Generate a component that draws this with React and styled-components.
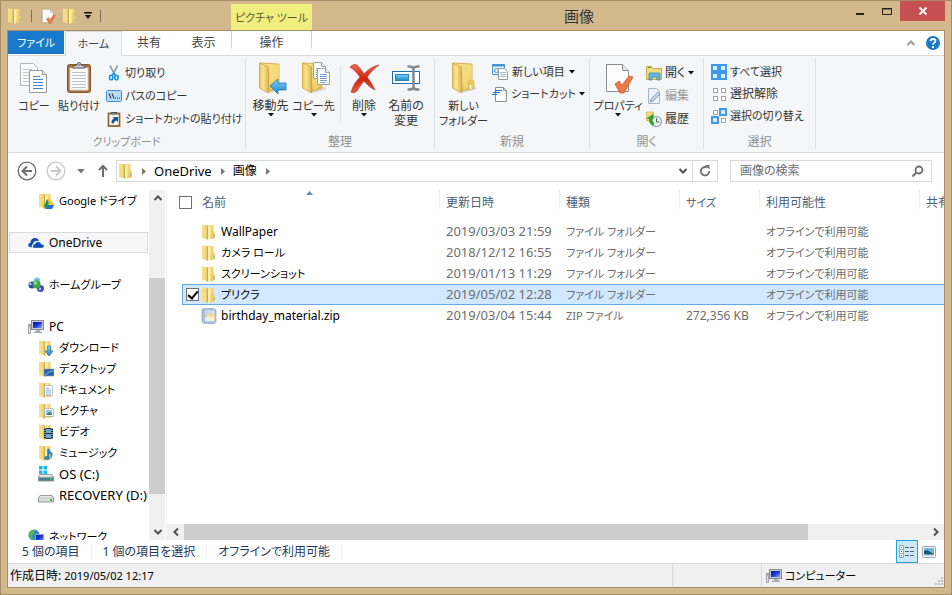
import { useState } from 'react';
import styled, { createGlobalStyle } from 'styled-components';

const GlobalStyle = createGlobalStyle`
  * {
    box-sizing: border-box;
  }
  body {
    margin: 0;
    font-family: 'Noto Sans', 'Noto Sans CJK JP', sans-serif;
    font-size: 12px;
    font-feature-settings: 'palt';
    line-height: 16px;
    color: #000;
  }
  button, input {
    font: inherit;
    font-feature-settings: inherit;
    color: inherit;
    margin: 0;
    padding: 0;
    border: 0;
    background: none;
  }
  a {
    color: inherit;
    text-decoration: none;
  }
  svg {
    display: block;
    flex: none;
  }
`;

const sizes = { kana: '11px', kanji: '12px', latin: '13px' };

const Window = styled.div`
  display: flex;
  flex-direction: column;
  height: 100vh;
  min-height: 420px;
  padding: 0 6px 6px;
  background: #d3b88b;
  border: 1px solid #a58c68;
  overflow: hidden;
`;
const TitleBar = styled.header`
  display: flex;
  height: 29px;
  flex: none;
`;
const QuickAccess = styled.div`
  display: flex;
  align-items: center;
  gap: 6px;
  width: 224px;
  flex: none;
  button {
    display: flex;
  }
`;
const QuickDivider = styled.span`
  width: 1px;
  height: 12px;
  margin: 0 2px;
  background: #7e6d53;
`;
const ContextTitle = styled.div`
  width: 81px;
  height: 26px;
  margin-top: 3px;
  flex: none;
  background: #f0ee7e;
  color: #5b5a33;
  font-size: 11px;
  line-height: 27px;
  text-align: center;
  white-space: nowrap;
`;
const Title = styled.h1`
  flex: 1;
  margin: 0;
  font-size: 15px;
  font-weight: 400;
  line-height: 30px;
  text-align: center;
  color: #333;
`;
const WindowButtons = styled.div`
  display: flex;
  align-items: flex-start;
`;
const WindowButton = styled.button`
  display: flex;
  align-items: center;
  justify-content: center;
  width: ${({ $close }) => ($close ? '45px' : '27px')};
  height: 20px;
  background: ${({ $close }) => ($close ? '#c75050' : 'transparent')};
`;

const Client = styled.div`
  display: flex;
  flex-direction: column;
  flex: 1;
  min-height: 0;
  border: 1px solid #a58c68;
  background: #fff;
`;

const Tabs = styled.nav`
  display: flex;
  height: 25px;
  flex: none;
  border-bottom: 1px solid #dadbdc;
`;
const Tab = styled.button`
  height: 24px;
  width: ${({ $width }) => $width}px;
  color: #444;
  font-size: ${({ $text = 'kanji' }) => sizes[$text]};
  line-height: 24px;
  text-align: center;
`;
const FileTab = styled(Tab)`
  height: 23px;
  margin-right: 1px;
  background: #1979ca;
  color: #fff;
`;
const ActiveTab = styled(Tab)`
  height: 25px;
  background: #f5f6f7;
  border: 1px solid #dadbdc;
  border-bottom: 0;
`;
const ContextTab = styled(Tab)`
  border: 1px solid;
  border-width: 0 1px;
  border-image: linear-gradient(#d0d0d0 60%, #fff 80%) 1;
`;
const TabTools = styled.div`
  display: flex;
  align-items: center;
  gap: 10px;
  margin-left: auto;
  padding-right: 4px;
`;

const Ribbon = styled.div`
  display: flex;
  height: 97px;
  flex: none;
  padding-top: 2px;
  background: #f5f6f7;
  border-bottom: 1px solid #dadbdc;
`;
const Group = styled.section`
  display: flex;
  flex-direction: column;
  width: ${({ $width }) => $width}px;
  height: 91px;
  flex: none;
  border-right: 1px solid #dfe1e4;
`;
const GroupBody = styled.div`
  display: flex;
  flex: 1;
  padding: 3px 0 0 ${({ $pad = 5 }) => $pad}px;
`;
const GroupName = styled.h2`
  margin: 0;
  font-size: ${({ $text = 'kanji' }) => sizes[$text]};
  font-weight: 400;
  line-height: 14px;
  text-align: center;
  color: #8e9093;
`;
const BigButton = styled.button`
  display: flex;
  flex-direction: column;
  align-items: center;
  width: ${({ $width }) => $width}px;
  height: 70px;
  flex: none;
  padding-top: 1px;
  font-size: ${({ $text = 'kanji' }) => sizes[$text]};
  line-height: 15px;
  color: #333;
  white-space: nowrap;
  span {
    padding-top: 4px;
  }
`;
const SmallColumn = styled.div`
  display: flex;
  flex-direction: column;
  align-items: flex-start;
  padding-left: ${({ $pad = 0 }) => $pad}px;
`;
const SmallButton = styled.button`
  display: flex;
  align-items: center;
  gap: ${({ $gap = 3 }) => $gap}px;
  height: ${({ $height = 23 }) => $height}px;
  font-size: ${({ $text = 'kanji' }) => sizes[$text]};
  color: #333;
  white-space: nowrap;
  &:disabled {
    color: #9a9a9a;
  }
`;
const InnerDivider = styled.span`
  width: 1px;
  height: 55px;
  margin: 6px 2px 0 5px;
  background: #dfe1e4;
`;

const AddressRow = styled.div`
  display: flex;
  align-items: center;
  height: 36px;
  flex: none;
  padding: 0 12px 0 9px;
`;
const History = styled.div`
  display: flex;
  align-items: center;
  width: 99px;
  flex: none;
  gap: 9px;
  button:nth-child(3) {
    padding: 0 3px 0 2px;
  }
`;
const AddressBox = styled.nav`
  display: flex;
  align-items: center;
  flex: 1;
  height: 22px;
  padding-left: 1px;
  border: 1px solid #d9d9d9;
`;
const Place = styled.a`
  padding: 0 9px 0 8px;
  font-size: ${({ $text = 'kanji' }) => sizes[$text]};
`;
const AddressButton = styled.button`
  display: flex;
  align-items: center;
  justify-content: center;
  width: 25px;
  height: 20px;
  margin-left: ${({ $push }) => ($push ? 'auto' : '0')};
  padding-left: ${({ $push }) => ($push ? '6px' : '0')};
  border-left: ${({ $line }) => ($line ? '1px solid #d9d9d9' : '0')};
`;
const SearchBox = styled.label`
  display: flex;
  align-items: center;
  width: 202px;
  height: 22px;
  margin-left: 12px;
  padding: 0 7px 0 9px;
  border: 1px solid #d9d9d9;
  input {
    flex: 1;
    min-width: 0;
    outline: 0;
  }
  input::placeholder {
    color: #6d6d6d;
    opacity: 1;
  }
`;

const Main = styled.main`
  display: flex;
  flex: 1;
  min-height: 0;
  padding-top: 1px;
`;
const Tree = styled.nav`
  width: 141px;
  flex: none;
  overflow: hidden;
`;
const TreeItem = styled.a`
  display: flex;
  align-items: center;
  gap: 5px;
  height: 21px;
  margin: ${({ $gap }) => ($gap ? '21px' : '0')} 1px 0;
  padding-left: ${({ $nested }) => ($nested ? 28 : 18)}px;
  border: 1px solid ${({ $selected }) => ($selected ? '#dadada' : 'transparent')};
  background: ${({ $selected }) => ($selected ? '#f7f7f7' : 'transparent')};
  font-size: ${({ $text = 'kana' }) => sizes[$text]};
  white-space: nowrap;
`;
const ScrollBar = styled.div`
  display: flex;
  flex-direction: column;
  width: 16px;
  flex: none;
  background: #f0f0f0;
`;
const ScrollArrow = styled.button`
  display: flex;
  align-items: center;
  justify-content: center;
  width: 17px;
  height: 16px;
  flex: none;
`;
const ScrollTrack = styled.div`
  display: flex;
  flex-direction: column;
  justify-content: flex-end;
  flex: 1;
  padding-bottom: 30px;
`;
const ScrollThumb = styled.div`
  height: 75%;
  background: #cdcdcd;
`;
const ListPane = styled.div`
  display: flex;
  flex-direction: column;
  flex: 1;
  min-width: 0;
  margin-left: 1px;
  border-left: 1px solid #f0f0f0;
`;
const ListScroll = styled.div`
  flex: 1;
  min-height: 0;
  overflow: hidden;
  padding-left: 15px;
`;
const FileTable = styled.table`
  width: 100%;
  min-width: 857px;
  table-layout: fixed;
  border-spacing: 0;
  th, td {
    height: 21px;
    padding: 0 0 0 6px;
    font-weight: 400;
    text-align: left;
    white-space: nowrap;
  }
  th {
    height: 23px;
    padding-top: 2px;
    color: #4c607a;
    border-left: 1px solid;
    border-image: linear-gradient(#dfe6ef, #fff) 1;
  }
  th:first-child {
    border: 0;
  }
  th:first-child, td:first-child {
    padding-left: 3px;
  }
  tbody::before {
    content: '';
    display: block;
    height: 8px;
  }
`;
const HeadCell = styled.th`
  font-size: ${({ $text = 'kanji' }) => sizes[$text]};
`;
const FileRow = styled.tr`
  background: ${({ $selected }) => ($selected ? '#d1e8ff' : 'transparent')};
  td {
    color: #6d6d6d;
    padding-left: 7px;
    border: solid ${({ $selected }) => ($selected ? '#66a7e8' : 'transparent')};
    border-width: 1px 0;
    line-height: 19px;
  }
  td:first-child {
    border-left-width: 1px;
    color: #000;
  }
`;
const FileCell = styled.td`
  font-size: ${({ $text = 'kanji' }) => sizes[$text]};
`;
const NameCell = styled.div`
  display: flex;
  align-items: center;
  gap: 4px;
`;
const CheckBox = styled.input`
  appearance: none;
  display: flex;
  justify-content: center;
  width: 13px;
  height: 13px;
  flex: none;
  margin-right: ${({ $header }) => ($header ? '6px' : '-2px')};
  border: 1px solid #707070;
  background: #fff;
  visibility: ${({ $hidden }) => ($hidden ? 'hidden' : 'visible')};
  &:checked::after {
    content: '';
    width: 4px;
    height: 8px;
    border: solid #000;
    border-width: 0 2px 2px 0;
    transform: rotate(40deg);
  }
`;
const HeaderName = styled.div`
  display: flex;
  align-items: center;
  position: relative;
  margin-left: -6px;
  gap: 4px;
`;
const SortMark = styled.svg`
  position: absolute;
  left: 49%;
  top: -4px;
`;
const HorizontalBar = styled.div`
  display: flex;
  height: 16px;
  flex: none;
  background: #f0f0f0;
`;
const HorizontalTrack = styled.div`
  flex: 1;
`;
const HorizontalThumb = styled.div`
  width: 84%;
  height: 16px;
  background: #cdcdcd;
`;

const DetailsBar = styled.div`
  display: flex;
  align-items: center;
  height: 23px;
  flex: none;
  padding: 0 4px 0 3px;
  color: #1e395b;
`;
const Detail = styled.span`
  padding: 0 11px;
  line-height: 16px;
  border-right: 1px solid #f0f0f0;
`;
const ViewButtons = styled.div`
  display: flex;
  margin-left: auto;
`;
const ViewButton = styled.button`
  display: flex;
  align-items: center;
  justify-content: center;
  width: 22px;
  height: 23px;
  border: 1px solid ${({ $active }) => ($active ? '#26a0da' : 'transparent')};
  background: ${({ $active }) => ($active ? '#cce8f7' : 'transparent')};
`;
const StatusBar = styled.footer`
  display: flex;
  height: 24px;
  flex: none;
  border-top: 1px solid #d7d7d7;
  background: #f0f0f0;
  line-height: 22px;
  time {
    font-size: 11px;
  }
`;
const StatusCell = styled.div`
  display: flex;
  align-items: center;
  gap: 3px;
  width: ${({ $width }) => ($width ? `${$width}px` : 'auto')};
  flex: ${({ $width }) => ($width ? 'none' : 1)};
  margin: 1px 0;
  padding-left: ${({ $width }) => ($width ? 4 : 2)}px;
  border-left: ${({ $width }) => ($width ? '1px solid #d7d7d7' : '0')};
  font-size: ${({ $text = 'kanji' }) => sizes[$text]};
  svg:last-child {
    margin: auto 1px 1px auto;
  }
`;

const Gradients = () => (
  <svg width="0" height="0" style={{ position: 'absolute' }} aria-hidden="true">
    <defs>
      <linearGradient id="gold" x1="0" y1="0" x2="1" y2="1">
        <stop offset="0" stopColor="#f9e89a" />
        <stop offset="0.6" stopColor="#efd06a" />
        <stop offset="1" stopColor="#d9ab3e" />
      </linearGradient>
      <linearGradient id="flap" x1="0" y1="0" x2="1" y2="0">
        <stop offset="0" stopColor="#ecc65a" />
        <stop offset="0.4" stopColor="#fae594" />
        <stop offset="1" stopColor="#dcb450" />
      </linearGradient>
      <linearGradient id="leaf" x1="0" y1="0" x2="1" y2="0">
        <stop offset="0" stopColor="#f5e08a" />
        <stop offset="0.7" stopColor="#f3da7e" />
        <stop offset="1" stopColor="#d6b04c" />
      </linearGradient>
      <linearGradient id="blue" x1="0" y1="0" x2="0" y2="1">
        <stop offset="0" stopColor="#7fd0f5" />
        <stop offset="1" stopColor="#1787cf" />
      </linearGradient>
      <linearGradient id="red" x1="0" y1="0" x2="0" y2="1">
        <stop offset="0" stopColor="#f06a4f" />
        <stop offset="0.5" stopColor="#d0220f" />
        <stop offset="1" stopColor="#e4614a" />
      </linearGradient>
      <linearGradient id="screen" x1="0" y1="0" x2="1" y2="1">
        <stop offset="0" stopColor="#0a1a9c" />
        <stop offset="0.5" stopColor="#1b36d6" />
        <stop offset="1" stopColor="#7fb2f5" />
      </linearGradient>
      <linearGradient id="disk" x1="0" y1="0" x2="0" y2="1">
        <stop offset="0" stopColor="#f6f6f6" />
        <stop offset="1" stopColor="#8f9499" />
      </linearGradient>
    </defs>
  </svg>
);

const Folder = ({ children }) => (
  <svg width="16" height="16" viewBox="0 0 16 16">
    <path d="M6 1h6.500v13.500L6 15.500z" fill="url(#gold)" />
    <path d="M7 2h2.500v13L7 15.500z" fill="#fbeeb0" />
    <path d="M1 .5l5.500.7V15.500L1 14z" fill="url(#leaf)" />
    <path d="M6.500 1.500v14" stroke="#c9a040" strokeWidth=".7" />
    <path d="M10.500 8.500h3.500v5.500l-3.500 1z" fill="#f0d169" />
    <path d="M12.500 10.500h1v3h-1z" fill="#5fb4dc" />
    {children}
  </svg>
);

const MiniSheet = ({ x, y }) => (
  <g transform={`translate(${x} ${y})`}>
    <path d="M.5.5h8l4 4v12H.5z" fill="#fff" stroke="#9aa0a6" />
    <path d="M8.500.5v4h4" fill="#eee" stroke="#9aa0a6" />
    <path d="M3 6.500h7M3 8.500h7M3 10.500h7M3 12.500h7M3 14.500h5" stroke="#77a3d3" />
  </g>
);

const BigFolder = ({ kind }) => (
  <svg width="32" height="32" viewBox="0 0 32 32">
    <path d="M10 29l17-4 2 2-14 4z" fill="#000" opacity=".12" />
    <path d="M5 1l19 1v24l-10 3z" fill="url(#gold)" stroke="#d2a53e" strokeWidth=".8" />
    <path d="M14 5l10-2v21l-8 4z" fill="#f6df86" opacity=".6" />
    <path d="M4.500 1l9 4v26l-9-5z" fill="url(#flap)" stroke="#cfa03a" strokeWidth=".8" />
    {kind === 'new' && (
      <g>
        <path d="M21 19q5-2 5 1v6l-5 2z" fill="#f0cd61" stroke="#d2a53e" strokeWidth=".6" />
        <path d="M22.500 23v4" stroke="#fff" strokeWidth="1.500" />
      </g>
    )}
    {kind === 'move' && (
      <path d="M15 24l8-7v4h8v7h-8v4z" fill="url(#blue)" stroke="#2377b5" strokeWidth=".8" />
    )}
    {kind === 'copy' && (
      <g>
        <MiniSheet x={15} y={0} />
        <MiniSheet x={19} y={6} />
      </g>
    )}
  </svg>
);

const CopyIcon = () => (
  <svg width="32" height="32" viewBox="0 0 32 32">
    <path d="M2.500 1.500h13l4 4v18h-17z" fill="#fbfbfb" stroke="#b2b4b6" />
    <path d="M5 7.500h9M5 10.500h6M5 13.500h6M5 16.500h6M5 19.500h6" stroke="#c5c9cd" />
    <path d="M11.500 8.500h13l4 4v18h-17z" fill="#fff" stroke="#98999b" />
    <path d="M24.500 8.500v4h4" fill="#eee" stroke="#98999b" />
    <path d="M15 14.500h7M15 17.500h10M15 20.500h10M15 23.500h10M15 26.500h10" stroke="#3f88d0" />
  </svg>
);

const PasteIcon = () => (
  <svg width="32" height="32" viewBox="0 0 32 32">
    <rect x="4.500" y="2.500" width="23" height="28" rx="2" fill="#a9743f" stroke="#855726" />
    <path d="M7 6h18v22H7z" fill="#fff" stroke="#d8d4cd" />
    <path d="M9 10.500h14M9 13.500h14M9 16.500h14M9 19.500h14M9 22.500h14M9 25.500h14" stroke="#b9c6cf" />
    <path d="M10 6V4l4-1q0-2.500 2-2.500T18 3l4 1v2z" fill="#ced1d4" stroke="#54595e" />
    <circle cx="16" cy="3" r=".8" fill="#54595e" />
  </svg>
);

const DeleteIcon = () => (
  <svg width="32" height="32" viewBox="0 0 32 32">
    <path
      d="M2 5q4-4 7-2 4 4 7 9Q22 5 31 3 25 7 19 15q5 6 8 13-5-2-11-9-5 6-7 10-3 3-6 1 2-8 9-15Q7 8 2 5z"
      fill="url(#red)"
      stroke="#b52716"
      strokeWidth=".6"
    />
  </svg>
);

const RenameIcon = () => (
  <svg width="32" height="32" viewBox="0 0 32 32">
    <rect x="2.500" y="9.500" width="27" height="12" fill="#fff" stroke="#1f6fb0" />
    <rect x="5.500" y="12.500" width="13" height="6" fill="url(#blue)" stroke="#2a7fc1" />
    <path d="M17.500 4.500q5-.5 6 2 1-2.500 6-2M23.500 6v20M17.500 27.500q5 .5 6-2 1 2.500 6 2" fill="none" stroke="#84888c" strokeWidth="2.500" />
  </svg>
);

const PropertiesIcon = ({ size = 32 }) => (
  <svg width={size} height={size} viewBox="0 0 32 32">
    <path d="M4.500 2.500h16l6 6v21h-22z" fill="#fcfcfc" stroke="#8c8c8c" />
    <path d="M20.500 2.500v6h6" fill="#e5e5e5" stroke="#8c8c8c" />
    <path d="M13 22l4-3 3 4 7-9 4 1-9 16h-4z" fill="#ee7948" stroke="#c9562a" strokeWidth=".7" />
  </svg>
);

const CutIcon = () => (
  <svg width="16" height="16" viewBox="0 0 16 16">
    <path d="M4 .5l4.500 9M11.500.5L7 9.500" stroke="#7d929f" strokeWidth="1.500" />
    <ellipse cx="5.200" cy="12.500" rx="1.700" ry="2.300" fill="none" stroke="#1796d8" strokeWidth="1.600" />
    <ellipse cx="10.500" cy="12.500" rx="1.700" ry="2.300" fill="none" stroke="#1796d8" strokeWidth="1.600" />
    <path d="M7.800 8l-2 3M7.800 8l2.200 3" stroke="#1796d8" strokeWidth="1.500" />
  </svg>
);

const PathIcon = () => (
  <svg width="16" height="16" viewBox="0 0 16 16">
    <rect x=".5" y="2.500" width="15" height="11" rx="1" fill="#b4dbfb" stroke="#3f8fdb" />
    <path d="M3 5.500l2 5M6 5.500l2 5" stroke="#222" />
    <path d="M9 10h1M11 10h1M13 10h1" stroke="#222" />
  </svg>
);

const PasteLinkIcon = () => (
  <svg width="16" height="16" viewBox="0 0 16 16">
    <rect x="2.500" y="2.500" width="11" height="12.500" fill="#fff" stroke="#93672f" strokeWidth="1.800" />
    <path d="M5 3V1.500h6V3z" fill="#aaa" stroke="#555" />
    <rect x="5" y="5.500" width="7" height="7" fill="#f2f6fa" />
    <path d="M5.500 12.500q-.5-4 2.500-5L7 6h5v5l-1.300-1.500Q8 10 7.500 12.500z" fill="#165a9c" />
  </svg>
);

const NewItemIcon = () => (
  <svg width="16" height="16" viewBox="0 0 16 16">
    <path d="M.5.5h12v10H.5z" fill="#e4f1fa" stroke="#4695cf" />
    <path d="M.5 1.500h12" stroke="#4695cf" strokeWidth="2" />
    <circle cx="4.500" cy="6.500" r="2" fill="none" stroke="#4695cf" />
    <path d="M6.500 4.500h6l3 3v8h-9z" fill="#fff" stroke="#969a9e" />
    <path d="M8 8.500h6M8 10.500h6M8 12.500h6" stroke="#a9b8c4" />
  </svg>
);

const ShortcutIcon = () => (
  <svg width="16" height="16" viewBox="0 0 16 16">
    <path d="M3.500 1.500h8l3 3v11h-11z" fill="#fff" stroke="#8b8f93" />
    <path d="M11.500 1.500v3h3" fill="none" stroke="#8b8f93" />
    <path d="M3 4.500h7M1 6.500h7M0 8.500h5" stroke="#1573d0" />
  </svg>
);

const OpenIcon = () => (
  <svg width="16" height="16" viewBox="0 0 16 16">
    <path d="M.5 1.500h5l1 2h9v11H.5z" fill="#f2d982" stroke="#c9a94c" />
    <path d="M2 2.500h3" stroke="#4fb24f" />
    <path d="M3 15V9q0-1 1-1h9q1 0 1 1v6h-3v-3H6v3z" fill="#66b9e2" stroke="#2d83b5" strokeWidth=".7" />
  </svg>
);

const EditIcon = () => (
  <svg width="16" height="16" viewBox="0 0 16 16">
    <path d="M2.500.5h8l3 3v12h-11z" fill="#eef4fb" stroke="#a2b5cc" />
    <path d="M5 11l7-7 2 2-7 7-3 1z" fill="#c4d4e6" stroke="#89a1bf" />
  </svg>
);

const HistoryIcon = () => (
  <svg width="16" height="16" viewBox="0 0 16 16">
    <path d="M.5 1h7v9h-7z" fill="url(#gold)" stroke="#d2a53e" strokeWidth=".6" />
    <circle cx="10.500" cy="10.500" r="5" fill="#e9f1f5" stroke="#7d8b94" />
    <path d="M10.500 7v4h3" fill="none" stroke="#56646e" />
    <path d="M7 3.500v3q-2 3 1 6l-1.500 2q-4-3-3-7H1z" fill="#2da72d" stroke="#168016" strokeWidth=".5" />
  </svg>
);

const squares = [[1, 1], [9, 1], [1, 9], [9, 9]];
const SelectIcon = ({ lit }) => (
  <svg width="16" height="16" viewBox="0 0 16 16">
    {squares.map(([x, y], i) =>
      lit.includes(i) ? (
        <g key={i}>
          <rect x={x - 1} y={y - 1} width="8" height="8" fill="#3d98ee" />
          <rect x={x + 1} y={y + 1} width="4" height="4" fill="#d8ecfd" />
        </g>
      ) : (
        <rect key={i} x={x + 1.5} y={y + 1.5} width="4" height="4" fill="#fff" stroke="#a4a4a4" />
      )
    )}
  </svg>
);

const Caret = ({ color = '#111', size = 6 }) => (
  <svg width={size} height={size / 2 + 1} viewBox="0 0 6 4">
    <path d="M0 0h6L3 3.500z" fill={color} />
  </svg>
);

const Crumb = () => (
  <svg width="4" height="7" viewBox="0 0 4 7">
    <path d="M0 0l4 3.500L0 7z" fill="#777" />
  </svg>
);

const turns = { up: 0, right: 90, down: 180, left: 270 };
const Chevron = ({ to, color = '#505050' }) => (
  <svg width="10" height="10" viewBox="0 0 10 10">
    <path d="M1.500 7L5 3.500 8.500 7" fill="none" stroke={color} strokeWidth="2" transform={`rotate(${turns[to]} 5 5)`} />
  </svg>
);

const RoundArrow = ({ back }) => (
  <svg width="20" height="20" viewBox="0 0 20 20">
    <g transform={back ? undefined : 'rotate(180 10 10)'} fill="none" stroke={back ? '#6e6e6e' : '#c9c9c9'}>
      <circle cx="10" cy="10" r="8.800" strokeWidth="1.300" />
      <path d="M15 10H6M10 5.500L5.500 10l4.500 4.500" strokeWidth="2" />
    </g>
  </svg>
);

const OneDriveIcon = () => (
  <svg width="16" height="16" viewBox="0 0 16 16">
    <path d="M.5 11.500q-1-3 2-4Q3 3 7 3q3 0 4 3-5-1-6 3-2 1-1 3.500z" fill="#0b4ab0" />
    <path d="M5 13q-1-4 2-4 1-3 4-2 2 0 2 2 3 0 3 2t-2 2z" fill="#0b4ab0" stroke="#fff" strokeWidth=".4" />
  </svg>
);

const HomeGroupIcon = () => (
  <svg width="16" height="16" viewBox="0 0 16 16">
    <circle cx="9" cy="3.500" r="3" fill="#78bce8" />
    <circle cx="4" cy="8" r="3.500" fill="#2c4ba8" />
    <circle cx="12.500" cy="11.500" r="3.500" fill="#3c55ac" />
    <circle cx="8.500" cy="7.500" r="4" fill="#3aa843" />
    <circle cx="7.500" cy="6" r="1.500" fill="#a9e5a0" />
    <circle cx="2.500" cy="7" r="1.200" fill="#b1c7ef" />
    <circle cx="12" cy="12" r="1.200" fill="#b1c7ef" />
  </svg>
);

const PcIcon = () => (
  <svg width="16" height="16" viewBox="0 0 16 16">
    <rect x="3.500" y="1.500" width="12" height="9" fill="#c9cbd0" stroke="#888c94" />
    <rect x="5" y="3" width="9" height="6" fill="url(#screen)" />
    <path d="M8 11h4v1.500h2V14H6v-1.500h2z" fill="#a7abb2" />
    <rect x=".5" y="5.500" width="2" height="9" fill="#dfe1e4" stroke="#83878d" strokeWidth=".7" />
    <path d="M1 7h1" stroke="#2fae2f" />
  </svg>
);

const DiskIcon = ({ system }) => (
  <svg width="16" height="16" viewBox="0 0 16 16">
    {system && <path d="M1 0h3.500v3.500H1zM5.500 0H9v3.500H5.500zM1 4.500h3.500V8H1zM5.500 4.500H9V8H5.500z" fill="#18b9f1" />}
    <path d="M2 8.500h12l1.500 2.500v4H.5v-4z" fill="url(#disk)" stroke="#72797e" strokeWidth=".7" />
    <path d="M1 11.500h14v3H1z" fill={system ? '#4e7e93' : '#dedfe0'} />
    <path d="M12 12h2v2h-2z" fill="#36c436" />
  </svg>
);

const NetworkIcon = () => (
  <svg width="16" height="16" viewBox="0 0 16 16">
    <circle cx="6" cy="6" r="5.500" fill="#2a86d8" />
    <path d="M2 2q4-2 5 1L4 7q2 3 0 4Q0 8 2 2z" fill="#55b947" />
    <rect x="7.500" y="5.500" width="8" height="7" fill="url(#screen)" stroke="#9da1a9" />
    <path d="M9 14h5" stroke="#888" />
  </svg>
);

const ZipIcon = () => (
  <svg width="16" height="16" viewBox="0 0 16 16">
    <path d="M1 1l10-1 4 2v12l-3 2-10-1-1-2z" fill="#a9c0e2" stroke="#8098c4" strokeWidth=".6" />
    <path d="M4 2.500h10v11H4z" fill="#cfdef2" />
    <path d="M5 5.500h3l1 1h5v6H5z" fill="#f3dfa0" stroke="#d8bd70" strokeWidth=".5" />
    <path d="M4 9h9v4H4z" fill="#f7f9fd" opacity=".7" />
  </svg>
);

const overlays = {
  drive: (
    <g>
      <path d="M9 6h3l4 6h-4z" fill="#f8c61a" />
      <path d="M9 6l2 4-3 6-2-3z" fill="#1a9b50" />
      <path d="M9.500 12H16l-2 4H7.500z" fill="#256fd8" />
    </g>
  ),
  download: <path d="M9.500 6h3v5H15l-4 5-4-5h2.500z" fill="url(#blue)" stroke="#176ba8" strokeWidth=".6" />,
  desktop: (
    <g>
      <path d="M6 8h10v7H6z" fill="#2760a8" stroke="#8aa5c4" strokeWidth=".6" />
      <path d="M7 14q4-4 8-4" stroke="#7db9ec" fill="none" />
    </g>
  ),
  document: (
    <g>
      <path d="M6.500 3.500h8v10h-8z" fill="#fff" stroke="#a9afb5" strokeWidth=".7" />
      <path d="M8 6h3M8 8h5M8 10h5M8 12h5" stroke="#6b9ac9" strokeWidth=".8" />
    </g>
  ),
  picture: (
    <g>
      <path d="M6.500 5.500h9v8h-9z" fill="#fff" stroke="#9fa5ab" strokeWidth=".7" />
      <path d="M8 7h6v5H8z" fill="#8cc6ed" />
      <path d="M8 12l3-3 3 1v2z" fill="#3c8467" />
    </g>
  ),
  video: (
    <g>
      <path d="M6 4h9v11H6z" fill="#2b3136" />
      <path d="M8 5h5v4H8zM8 10h5v4H8z" fill="#6aa8cf" />
      <path d="M7 4v11M14 4v11" stroke="#e8e8e8" strokeDasharray="1 1" />
    </g>
  ),
  music: (
    <g fill="#1e8bd6" stroke="#115f9b" strokeWidth=".4">
      <path d="M9.500 4h1.500q0 2 3 4 1 2-.5 4 .5-3-2.500-4v5h-1.500z" />
      <ellipse cx="9" cy="13" rx="2.400" ry="1.800" />
    </g>
  ),
};

const tree = [
  { name: 'Google ドライブ', icon: <Folder>{overlays.drive}</Folder>, nested: true },
  { name: 'OneDrive', icon: <OneDriveIcon />, gap: true, selected: true, text: 'kanji' },
  { name: 'ホームグループ', icon: <HomeGroupIcon />, gap: true },
  { name: 'PC', icon: <PcIcon />, gap: true, text: 'kanji' },
  { name: 'ダウンロード', icon: <Folder>{overlays.download}</Folder>, nested: true },
  { name: 'デスクトップ', icon: <Folder>{overlays.desktop}</Folder>, nested: true },
  { name: 'ドキュメント', icon: <Folder>{overlays.document}</Folder>, nested: true },
  { name: 'ピクチャ', icon: <Folder>{overlays.picture}</Folder>, nested: true },
  { name: 'ビデオ', icon: <Folder>{overlays.video}</Folder>, nested: true },
  { name: 'ミュージック', icon: <Folder>{overlays.music}</Folder>, nested: true },
  { name: 'OS (C:)', icon: <DiskIcon system />, nested: true, text: 'latin' },
  { name: 'RECOVERY (D:)', icon: <DiskIcon />, nested: true, text: 'latin' },
  { name: 'ネットワーク', icon: <NetworkIcon />, gap: true },
];

const files = [
  { name: 'WallPaper', date: '2019/03/03 21:59', type: 'ファイル フォルダー', text: 'kanji' },
  { name: 'カメラ ロール', date: '2018/12/12 16:55', type: 'ファイル フォルダー' },
  { name: 'スクリーンショット', date: '2019/01/13 11:29', type: 'ファイル フォルダー' },
  { name: 'プリクラ', date: '2019/05/02 12:28', type: 'ファイル フォルダー' },
  { name: 'birthday_material.zip', date: '2019/03/04 15:44', type: 'ZIP ファイル', size: '272,356 KB', text: 'kanji' },
];

const RibbonTabs = () => (
  <Tabs>
    <FileTab $width={56} $text="kana">ファイル</FileTab>
    <ActiveTab $width={57} $text="kana">ホーム</ActiveTab>
    <Tab $width={54}>共有</Tab>
    <Tab $width={55}>表示</Tab>
    <ContextTab $width={81}>操作</ContextTab>
    <TabTools>
      <button aria-label="リボンの最小化">
        <Chevron to="up" color="#9a9a9a" />
      </button>
      <button aria-label="ヘルプ">
        <svg width="14" height="14" viewBox="0 0 14 14">
          <circle cx="7" cy="7" r="7" fill="#1979ca" />
          <path d="M4.500 5.200Q4.700 3 7 3t2.500 2Q9.500 6.200 8 7 7 7.500 7 8.700" fill="none" stroke="#fff" strokeWidth="1.800" />
          <path d="M6 10h2v2H6z" fill="#fff" />
        </svg>
      </button>
    </TabTools>
  </Tabs>
);

const RibbonPanel = () => (
  <Ribbon>
    <Group $width={238}>
      <GroupBody>
        <BigButton $width={42} $text="kana"><CopyIcon /><span>コピー</span></BigButton>
        <BigButton $width={48} $text="kana"><PasteIcon /><span>貼り付け</span></BigButton>
        <SmallColumn $pad={3}>
          <SmallButton $text="kana"><CutIcon />切り取り</SmallButton>
          <SmallButton $text="kana"><PathIcon />パスのコピー</SmallButton>
          <SmallButton $text="kana"><PasteLinkIcon />ショートカットの貼り付け</SmallButton>
        </SmallColumn>
      </GroupBody>
      <GroupName $text="kana">クリップボード</GroupName>
    </Group>
    <Group $width={189}>
      <GroupBody $pad={3}>
        <BigButton $width={43}><BigFolder kind="move" /><span>移動先</span><Caret /></BigButton>
        <BigButton $width={43} $text="kana"><BigFolder kind="copy" /><span>コピー先</span><Caret /></BigButton>
        <InnerDivider />
        <BigButton $width={42}><DeleteIcon /><span>削除</span><Caret /></BigButton>
        <BigButton $width={42}><RenameIcon /><span>名前の<br />変更</span></BigButton>
      </GroupBody>
      <GroupName>整理</GroupName>
    </Group>
    <Group $width={155}>
      <GroupBody $pad={4}>
        <BigButton $width={49} $text="kana"><BigFolder kind="new" /><span>新しい<br />フォルダー</span></BigButton>
        <SmallColumn $pad={4}>
          <SmallButton $height={22} $gap={4} $text="kana"><NewItemIcon />新しい項目<Caret /></SmallButton>
          <SmallButton $height={22} $text="kana"><ShortcutIcon />ショートカット<Caret /></SmallButton>
        </SmallColumn>
      </GroupBody>
      <GroupName>新規</GroupName>
    </Group>
    <Group $width={114}>
      <GroupBody $pad={4}>
        <BigButton $width={48} $text="kana"><PropertiesIcon /><span>プロパティ</span><Caret /></BigButton>
        <SmallColumn $pad={4}>
          <SmallButton><OpenIcon />開く<Caret /></SmallButton>
          <SmallButton disabled><EditIcon />編集</SmallButton>
          <SmallButton><HistoryIcon />履歴</SmallButton>
        </SmallColumn>
      </GroupBody>
      <GroupName>開く</GroupName>
    </Group>
    <Group $width={112}>
      <GroupBody $pad={7}>
        <SmallColumn>
          <SmallButton $height={22} $text="kana"><SelectIcon lit={[0, 1, 2, 3]} />すべて選択</SmallButton>
          <SmallButton $height={22}><SelectIcon lit={[]} />選択解除</SmallButton>
          <SmallButton $height={22} $text="kana"><SelectIcon lit={[1, 2]} />選択の切り替え</SmallButton>
        </SmallColumn>
      </GroupBody>
      <GroupName>選択</GroupName>
    </Group>
  </Ribbon>
);

const FileList = () => {
  const [selected, setSelected] = useState('プリクラ');
  const toggle = (name) => setSelected(selected === name ? '' : name);

  return (
    <ListPane>
      <ListScroll>
        <FileTable>
          <colgroup>
            <col />
            <col width="120" />
            <col width="120" />
            <col width="80" />
            <col width="160" />
            <col width="120" />
          </colgroup>
          <thead>
            <tr>
              <HeadCell>
                <HeaderName>
                  <CheckBox type="checkbox" aria-label="すべて選択" $header />
                  名前
                  <SortMark width="7" height="4" viewBox="0 0 7 4">
                    <path d="M0 4l3.500-4L7 4z" fill="#5a8fb8" />
                  </SortMark>
                </HeaderName>
              </HeadCell>
              <HeadCell>更新日時</HeadCell>
              <HeadCell>種類</HeadCell>
              <HeadCell $text="kana">サイズ</HeadCell>
              <HeadCell>利用可能性</HeadCell>
              <HeadCell>共有</HeadCell>
            </tr>
          </thead>
          <tbody>
            {files.map(({ name, date, type, size, text = 'kana' }) => (
              <FileRow key={name} $selected={selected === name}>
                <FileCell $text={text}>
                  <NameCell>
                    <CheckBox
                      type="checkbox"
                      aria-label={name}
                      checked={selected === name}
                      onChange={() => toggle(name)}
                      $hidden={selected !== name}
                    />
                    {size ? <ZipIcon /> : <Folder />}
                    {name}
                  </NameCell>
                </FileCell>
                <FileCell $text="latin">{date}</FileCell>
                <FileCell $text="kana">{type}</FileCell>
                <FileCell>{size}</FileCell>
                <FileCell $text="kana">オフラインで利用可能</FileCell>
                <FileCell />
              </FileRow>
            ))}
          </tbody>
        </FileTable>
      </ListScroll>
      <HorizontalBar>
        <ScrollArrow aria-label="左へ"><Chevron to="left" /></ScrollArrow>
        <HorizontalTrack><HorizontalThumb /></HorizontalTrack>
        <ScrollArrow aria-label="右へ"><Chevron to="right" /></ScrollArrow>
      </HorizontalBar>
    </ListPane>
  );
};

const App = () => (
  <Window>
    <GlobalStyle />
    <Gradients />
    <TitleBar>
      <QuickAccess>
        <Folder />
        <QuickDivider />
        <button aria-label="プロパティ"><PropertiesIcon size={16} /></button>
        <button aria-label="新しいフォルダー"><Folder /></button>
        <button aria-label="カスタマイズ">
          <svg width="8" height="7" viewBox="0 0 8 7">
            <path d="M0 0h8v1.500H0zM1 3h6L4 7z" fill="#111" />
          </svg>
        </button>
        <QuickDivider />
      </QuickAccess>
      <ContextTitle>ピクチャ ツール</ContextTitle>
      <Title>画像</Title>
      <WindowButtons>
        <WindowButton aria-label="最小化">
          <svg width="12" height="12" viewBox="0 0 12 12"><path d="M2 8h8v2H2z" fill="#222" /></svg>
        </WindowButton>
        <WindowButton aria-label="最大化">
          <svg width="12" height="12" viewBox="0 0 12 12">
            <path d="M1.500 3.500h9v6h-9zM1 4h10" fill="none" stroke="#222" />
          </svg>
        </WindowButton>
        <WindowButton aria-label="閉じる" $close>
          <svg width="10" height="10" viewBox="0 0 10 10">
            <path d="M1.500 1.500l7 7M8.500 1.500l-7 7" stroke="#fff" strokeWidth="1.800" />
          </svg>
        </WindowButton>
      </WindowButtons>
    </TitleBar>
    <Client>
      <RibbonTabs />
      <RibbonPanel />
      <AddressRow>
        <History>
          <button aria-label="戻る"><RoundArrow back /></button>
          <button aria-label="進む"><RoundArrow /></button>
          <button aria-label="最近表示した場所"><Caret color="#777" size={8} /></button>
          <button aria-label="上へ">
            <svg width="12" height="14" viewBox="0 0 12 14">
              <path d="M6 13V2M2 6l4-4 4 4" fill="none" stroke="#6e6e6e" strokeWidth="2" />
            </svg>
          </button>
        </History>
        <AddressBox>
          <Folder />
          <svg width="8" height="1" />
          <Crumb />
          <Place href="#onedrive" $text="latin">OneDrive</Place>
          <Crumb />
          <Place href="#pictures">画像</Place>
          <Crumb />
          <AddressButton aria-label="以前の場所" $push><Chevron to="down" /></AddressButton>
          <AddressButton aria-label="更新" $line>
            <svg width="12" height="12" viewBox="0 0 12 12">
              <path d="M8 2.500A4.200 4.200 0 1 0 10.200 6" fill="none" stroke="#6e6e6e" strokeWidth="1.800" />
              <path d="M6 0h4.500v4.500z" fill="#6e6e6e" />
            </svg>
          </AddressButton>
        </AddressBox>
        <SearchBox>
          <input type="search" aria-label="検索" placeholder="画像の検索" />
          <svg width="13" height="13" viewBox="0 0 13 13">
            <circle cx="8" cy="5" r="3.500" fill="none" stroke="#6e6e6e" strokeWidth="1.800" />
            <path d="M5.500 7.500L1.500 11.500" stroke="#6e6e6e" strokeWidth="2" />
          </svg>
        </SearchBox>
      </AddressRow>
      <Main>
        <Tree>
          {tree.map(({ name, icon, gap, nested, selected, text }) => (
            <TreeItem key={name} href={`#${name}`} $gap={gap} $nested={nested} $selected={selected} $text={text}>
              {icon}
              {name}
            </TreeItem>
          ))}
        </Tree>
        <ScrollBar>
          <ScrollArrow aria-label="上へスクロール"><Chevron to="up" /></ScrollArrow>
          <ScrollTrack><ScrollThumb /></ScrollTrack>
          <ScrollArrow aria-label="下へスクロール"><Chevron to="down" /></ScrollArrow>
        </ScrollBar>
        <FileList />
      </Main>
      <DetailsBar>
        <Detail>5 個の項目</Detail>
        <Detail>1 個の項目を選択</Detail>
        <Detail>オフラインで利用可能</Detail>
        <ViewButtons>
          <ViewButton aria-label="詳細" $active>
            <svg width="16" height="14" viewBox="0 0 16 14">
              <path d="M.5.5h4v4h-4zM.5 4.500h4v4h-4zM.5 8.500h4v4h-4z" fill="#fff" stroke="#9aa7b0" />
              <path d="M2 2.500h1" stroke="#29902f" />
              <path d="M2 6.500h1" stroke="#d22" />
              <path d="M2 10.500h1" stroke="#283ec0" />
              <path d="M6 2.500h4M11 2.500h4M6 6.500h4M11 6.500h4M6 10.500h4M11 10.500h4" stroke="#53626d" />
            </svg>
          </ViewButton>
          <ViewButton aria-label="大アイコン">
            <svg width="14" height="12" viewBox="0 0 14 12">
              <rect x=".5" y=".5" width="13" height="11" rx="1" fill="#fff" stroke="#9aa0a6" />
              <path d="M2 2h10v8H2z" fill="#6db6e8" />
              <path d="M2 5l3-1 7 4v2H2z" fill="#1b5c68" />
              <path d="M2 8.500h10V10H2z" fill="#b5dcf2" />
            </svg>
          </ViewButton>
        </ViewButtons>
      </DetailsBar>
      <StatusBar>
        <StatusCell>作成日時: <time>2019/05/02 12:17</time></StatusCell>
        <StatusCell $width={89} />
        <StatusCell $width={183} $text="kana">
          <PcIcon />
          コンピューター
          <svg width="9" height="9" viewBox="0 0 9 9">
            <path d="M7 1h2v2H7zM4 4h2v2H4zM7 4h2v2H7zM1 7h2v2H1zM4 7h2v2H4zM7 7h2v2H7z" fill="#bfbfbf" />
          </svg>
        </StatusCell>
      </StatusBar>
    </Client>
  </Window>
);

export default App;
